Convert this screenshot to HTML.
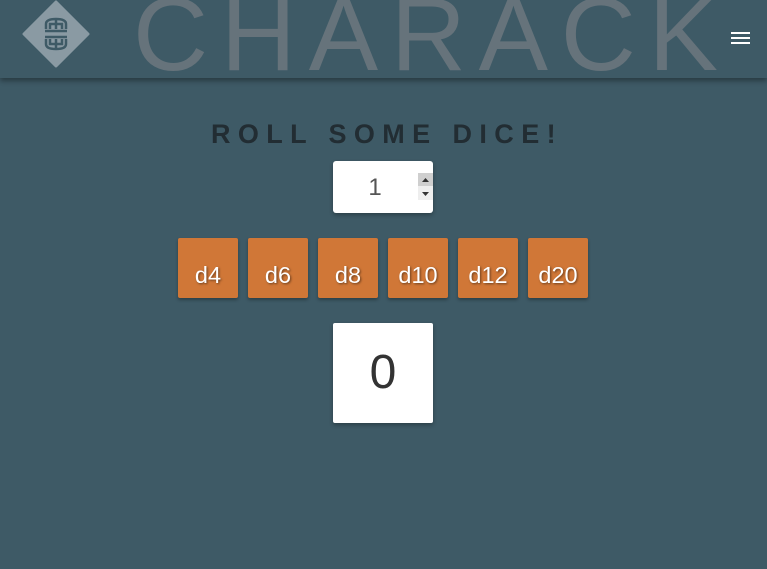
<!DOCTYPE html>
<html><head><meta charset="utf-8"><style>
body{margin:0;width:767px;height:569px;background:#3e5a66;font-family:"Liberation Sans",sans-serif;overflow:hidden;position:relative}
.hdr{position:absolute;left:0;top:0;width:767px;height:78px;background:#3e5a66;box-shadow:0 3px 5px rgba(0,0,0,.35)}
h1{position:absolute;left:0;width:767px;top:119px;margin:0;text-align:center;font-size:27px;font-weight:bold;letter-spacing:7.4px;color:#222d33;padding-left:7px;box-sizing:border-box}
.num{position:absolute;left:333px;top:161px;width:100px;height:52px;background:#fff;border-radius:3px;box-shadow:0 2px 4px rgba(0,0,0,.3)}
.num span{position:absolute;left:0;width:84px;top:13px;text-align:center;font-size:24px;color:#555}
.spin{position:absolute;left:418px;top:173px;width:15px;height:27px;background:#eee}
.spin .u{position:absolute;top:0;left:0;width:15px;height:13px;background:#cfcfcf}
.btn{position:absolute;top:238px;width:60px;height:60px;background:#d07737;border-radius:2px;box-shadow:0 2px 3px rgba(0,0,0,.3);color:#fff;font-size:23.5px;text-align:center;line-height:74px;text-shadow:1px 1px 2px rgba(0,0,0,.5)}
.res{position:absolute;left:333px;top:323px;width:100px;height:100px;background:#fff;border-radius:2px;box-shadow:0 2px 4px rgba(0,0,0,.3);text-align:center;font-size:48px;line-height:100px;color:#333}
</style></head><body>
<div class="hdr">
<svg width="767" height="78" style="position:absolute;left:0;top:0">
<polygon points="56,2 88,34 56,66 24,34" fill="#8a9aa3" stroke="#8a9aa3" stroke-width="3" stroke-linejoin="round"/>
<g fill="none" stroke="#3e5a66" stroke-width="2.5">
<path d="M46,29 V24 Q46,19 56,19 Q66,19 66,24 V29 M50,29 V24 H62 V29"/>
<path d="M46,39 V44 Q46,49 56,49 Q66,49 66,44 V39 M50,39 V44 H62 V39"/>
<path d="M45,31 H67 M45,37 H67 M56,19 V29 M56,39 V49"/>
</g>
<text x="133" y="70" font-family="Liberation Sans" font-size="104" fill="#66737b" textLength="585" lengthAdjust="spacing">CHARACK</text>
<g fill="#fff"><rect x="731" y="32" width="19" height="2"/><rect x="731" y="37" width="19" height="2"/><rect x="731" y="42" width="19" height="2"/></g>
</svg>
</div>
<h1>ROLL SOME DICE!</h1>
<div class="num"><span>1</span></div>
<div class="spin"><div class="u"></div>
<svg width="15" height="27" style="position:absolute;left:0;top:0"><path d="M4,9 L7.5,5 L11,9Z M4,19 L7.5,23 L11,19Z" fill="#333"/></svg></div>
<div class="btn" style="left:178px">d4</div>
<div class="btn" style="left:248px">d6</div>
<div class="btn" style="left:318px">d8</div>
<div class="btn" style="left:388px">d10</div>
<div class="btn" style="left:458px">d12</div>
<div class="btn" style="left:528px">d20</div>
<div class="res">0</div>
</body></html>
